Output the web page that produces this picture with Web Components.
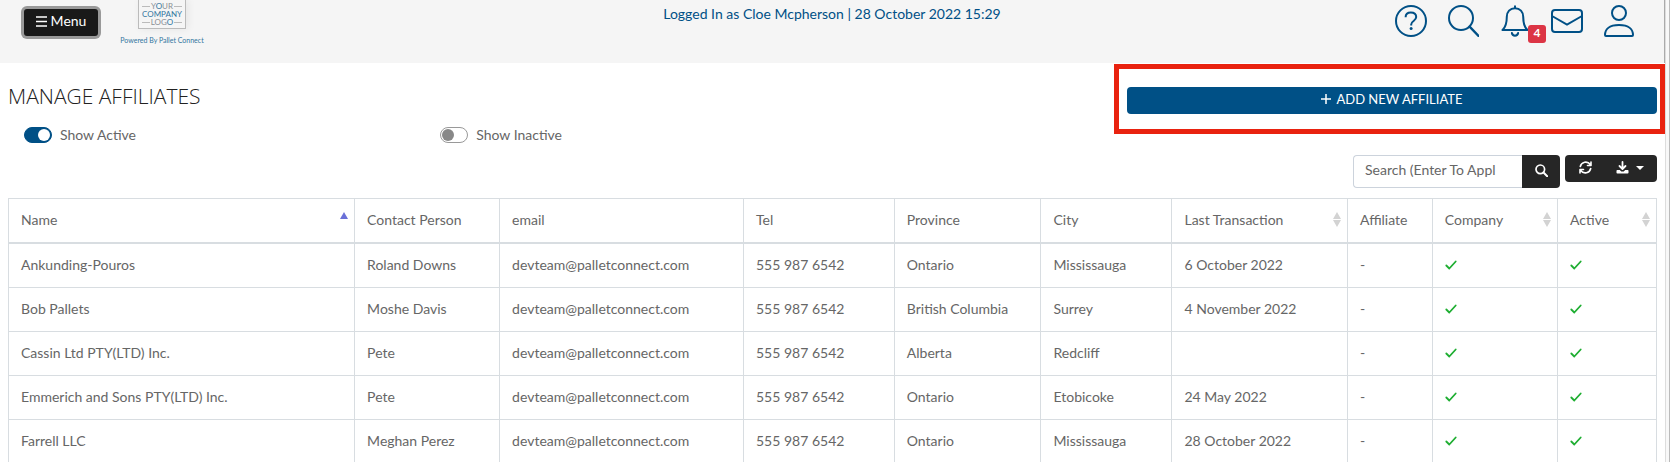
<!DOCTYPE html>
<html lang="en">
<head>
<meta charset="utf-8">
<title>Manage Affiliates</title>
<style>
  body { margin: 0; background: #fff; color: #666; font: 14px/20px Lato, "Open Sans", sans-serif; }
</style>
</head>
<body>
<app-shell>
  <app-header slot="header" user="Cloe Mcpherson" date="28 October 2022 15:29"></app-header>
  <page-title>
    MANAGE AFFILIATES
    <add-button slot="action">ADD NEW AFFILIATE</add-button>
  </page-title>
  <filter-row>
    <toggle-switch checked>Show Active</toggle-switch>
    <toggle-switch>Show Inactive</toggle-switch>
  </filter-row>
  <table-tools></table-tools>
  <affiliate-table></affiliate-table>
</app-shell>

<script>
const define = (name, html, setup) => {
  const template = document.createElement('template');
  template.innerHTML = '<style>*{box-sizing:border-box}button,input{font:inherit;margin:0}button{cursor:pointer}svg{display:block;fill:none;stroke:currentColor}</style>' + html;
  customElements.define(name, class extends HTMLElement {
    connectedCallback() {
      if (this.shadowRoot) return;
      const root = this.attachShadow({ mode: 'open' });
      root.append(template.content.cloneNode(true));
      if (setup) setup(root, this);
    }
  });
};

define('app-shell', `
  <style>
    :host { display: grid; grid-template-columns: 1fr 5px; height: 100vh; overflow: hidden; }
    .page { min-width: 0; overflow: hidden; }
    main { padding: 24px 8px 0; }
    .track { background: #f8f8f8; border-left: 1px solid #ddd; border-right: 1px solid #bbb; }
  </style>
  <div class="page"><slot name="header"></slot><main><slot></slot></main></div>
  <div class="track"></div>`);

define('app-header', `
  <style>
    :host { display: grid; grid-template-columns: 1fr auto 1fr; align-items: start; height: 63px;
      background: #f5f5f5; border-right: 1px solid #aaa; color: #005086; box-sizing: border-box; }
    .left { display: flex; align-items: flex-start; gap: 22px; padding-left: 24px; }
    .menu { display: flex; align-items: center; justify-content: center; gap: 4px; width: 74px; height: 27px; margin-top: 9px;
      padding: 0 0 3px; border: 0; border-radius: 3px; background: #191919; color: #fff; box-shadow: 0 0 0 3px #999; }
    .status { padding-top: 4px; line-height: 20px; }
    nav { display: flex; justify-content: flex-end; gap: 20px; padding: 5px 29px 0 0; }
    nav a { position: relative; color: inherit; }
    .badge { position: absolute; left: 29px; top: 20px; width: 18px; height: 18px; border-radius: 3px;
      background: #dc3545; color: #fff; font-size: 12px; font-weight: 700; line-height: 16px; text-align: center; }
  </style>
  <div class="left">
    <button class="menu" type="button">
      <svg width="11" height="11" viewBox="0 0 11 11" stroke-width="1.4"><path d="M0 1h11M0 5.5h11M0 10h11"/></svg>Menu
    </button>
    <company-logo></company-logo>
  </div>
  <div class="status"></div>
  <nav>
    <a href="#help" aria-label="Help"><svg width="32" height="32" viewBox="0 0 32 32" stroke-width="2"><circle cx="16" cy="16" r="15"/><path d="M10.6 12.2c0-3 2.2-4.7 5.2-4.7 3.2 0 5.4 1.8 5.4 4.6 0 3.9-5 3.8-5 7.3v1"/><circle cx="16.1" cy="23.6" r="1.5" fill="currentColor" stroke="none"/></svg></a>
    <a href="#search" aria-label="Search"><svg width="32" height="32" viewBox="0 0 32 32" stroke-width="2"><circle cx="14" cy="13" r="12"/><path d="M22.600 21.600 31.500 31" stroke-width="2.300" stroke-linecap="round"/></svg></a>
    <a href="#alerts" aria-label="Notifications"><svg width="32" height="32" viewBox="0 0 32 32" stroke-width="2" stroke-linejoin="round"><path d="M16 3.2c-5 0-8.2 3.7-8.2 8.6 0 6.700-1.500 10.800-4.300 13.200h25c-2.800-2.400-4.300-6.500-4.300-13.200 0-4.900-3.200-8.600-8.200-8.600zM16 .5v3"/><path d="M12.900 28c.5 3.500 5.700 3.500 6.200 0" stroke-linecap="round"/></svg><span class="badge">4</span></a>
    <a href="#mail" aria-label="Messages"><svg width="32" height="32" viewBox="0 0 32 32" stroke-width="2"><rect x="1" y="5" width="30" height="22" rx="3"/><path d="m1 11 15 8.600L31 11"/></svg></a>
    <a href="#profile" aria-label="Profile"><svg width="32" height="32" viewBox="0 0 32 32" stroke-width="2"><circle cx="16" cy="8" r="7"/><path d="M3 31c-.6 0-1-.4-1-1 0-5.500 4-10 14-10s14 4.500 14 10c0 .6-.4 1-1 1z"/></svg></a>
  </nav>`, (root, host) => {
  root.querySelector('.status').textContent = 'Logged In as ' + host.getAttribute('user') + ' | ' + host.getAttribute('date');
});

define('company-logo', `
  <style>
    :host { display: flex; flex-direction: column; align-items: center; width: 84px; color: #33759f; font-size: 7px; line-height: 10px; white-space: nowrap; }
    .frame { width: 48px; height: 29px; margin-bottom: 6px; padding-top: 2px; border: 1px solid #bbb; border-top: 0; box-shadow: 2px 0 8px #0001; font-size: 8px; line-height: 8px; }
    .line { display: flex; align-items: center; justify-content: center; gap: 1px; color: #8a8f94; }
    .line.wide { color: #33759f; }
    .line:not(.wide)::before, .line:not(.wide)::after { content: ""; width: 8px; height: 1px; background: #bbb; }
    b { font-weight: 400; color: #33759f; }
  </style>
  <div class="frame">
    <div class="line"><span>Y<b>O</b>UR</span></div>
    <div class="line wide">COMPANY</div>
    <div class="line"><span>LOG<b>O</b></span></div>
  </div>
  <span>Powered By Pallet Connect</span>`);

define('page-title', `
  <style>
    :host { display: grid; grid-template-columns: 19fr 9fr; align-items: start; }
    h1 { margin: 0; color: #222; font: 350 21px/18px "Open Sans", Lato, sans-serif; }
  </style>
  <h1><slot></slot></h1><slot name="action"></slot>`);

define('add-button', `
  <style>
    :host { display: block; position: relative; }
    button { display: flex; align-items: center; justify-content: center; gap: 5px; width: 100%; height: 27px; padding: 0 0 4px;
      border: 0; border-radius: 4px; background: #005086; color: #fff; font-size: 13px; }
    .callout { position: absolute; inset: -23px -8px -20px -13px; border: 5px solid #e9220f; pointer-events: none; }
  </style>
  <button type="button"><svg width="10" height="10" viewBox="0 0 10 10" stroke-width="1.500"><path d="M5 0v10M0 5h10"/></svg><span><slot></slot></span></button>
  <div class="callout"></div>`);

define('filter-row', `
  <style>:host { display: grid; grid-template-columns: repeat(4, 1fr); margin: 12px -8px 11px; }</style>
  <slot></slot>`);

define('toggle-switch', `
  <style>
    :host { display: block; padding-left: 24px; }
    label { display: flex; align-items: center; gap: 8px; line-height: 18px; }
    input { appearance: none; width: 28px; height: 16px; border: 1px solid #999; border-radius: 8px; background: #fff; padding: 1px; }
    input::before { content: ""; display: block; width: 12px; height: 12px; border-radius: 50%; background: #888; }
    input:checked { background: #005086; border-color: #005086; }
    input:checked::before { margin-left: 12px; background: #fff; }
  </style>
  <label><input type="checkbox" role="switch"><span><slot></slot></span></label>`, (root, host) => {
  root.querySelector('input').checked = host.hasAttribute('checked');
});

define('table-tools', `
  <style>
    :host { display: flex; justify-content: flex-end; align-items: flex-start; gap: 5px; margin-bottom: 10px; }
    form, .group { display: flex; }
    input { width: 169px; height: 33px; padding: 0 12px 4px 11px; border: 1px solid #ccd3dc; border-right: 0; border-radius: 4px 0 0 4px; background: #fff; color: #666; }
    input::placeholder { color: #666; opacity: 1; }
    button { display: flex; align-items: center; justify-content: center; gap: 7px; border: 0; padding: 0; background: #262626; color: #fff; }
    form button { width: 38px; height: 33px; border-radius: 0 4px 4px 0; padding-bottom: 2px; }
    .group { border-radius: 4px; overflow: hidden; }
    .group button { width: 40px; height: 27px; padding-bottom: 2px; }
    .group .export { width: 52px; padding-right: 2px; }
  </style>
  <form>
    <input type="search" aria-label="Search" placeholder="Search (Enter To Appl">
    <button type="button" aria-label="Search"><svg width="13" height="13" viewBox="0 0 13 13" stroke-width="1.700"><circle cx="5.300" cy="5.300" r="4.300"/><path d="m8.500 8.500 3.700 3.700" stroke-width="2" stroke-linecap="round"/></svg></button>
  </form>
  <div class="group">
    <button type="button" aria-label="Refresh"><svg width="13" height="13" viewBox="0 0 13 13" stroke-width="1.600" stroke-linecap="round" stroke-linejoin="round"><path d="M1.300 5.500c1-4.500 7-6 10-2M12 1v3.500H8.500M11.700 7.500c-1 4.500-7 6-10 2M1 12V8.500h3.500"/></svg></button>
    <button type="button" class="export" aria-label="Export"><svg width="13" height="13" viewBox="0 0 13 13" stroke-width="1.800" stroke-linecap="round" stroke-linejoin="round"><path d="M6.500 1v6.500M3.500 5l3 3 3-3"/><path d="M1.300 9h2.500l1.500 1.500h2.400L9.200 9h2.500c.6 0 .8.300.8.800v1.900c0 .5-.3.800-.8.800H1.300c-.5 0-.8-.3-.8-.8V9.800c0-.5.300-.8.800-.8z" fill="currentColor" stroke="none"/></svg><svg width="8" height="4" viewBox="0 0 8 4"><path d="M0 0h8L4 4z" fill="currentColor" stroke="none"/></svg></button>
  </div>`);

const columns = [
  ['Name', 21, 'asc'], ['Contact Person', 8.8], ['email', 14.8], ['Tel', 9.15], ['Province', 8.9], ['City', 7.95],
  ['Last Transaction', 10.65, 'both'], ['Affiliate', 5.15], ['Company', 7.6, 'both'], ['Active', 6, 'both']
];
const affiliates = [
  ['Ankunding-Pouros', 'Roland Downs', 'Ontario', 'Mississauga', '6 October 2022'],
  ['Bob Pallets', 'Moshe Davis', 'British Columbia', 'Surrey', '4 November 2022'],
  ['Cassin Ltd PTY(LTD) Inc.', 'Pete', 'Alberta', 'Redcliff', ''],
  ['Emmerich and Sons PTY(LTD) Inc.', 'Pete', 'Ontario', 'Etobicoke', '24 May 2022'],
  ['Farrell LLC', 'Meghan Perez', 'Ontario', 'Mississauga', '28 October 2022']
];
const arrows = {
  asc: '<svg width="8" height="15" viewBox="0 0 8 15"><path d="M4 0l4 7H0z" fill="#6a70d8" stroke="none"/></svg>',
  both: '<svg width="8" height="15" viewBox="0 0 8 15"><path d="M4 0l4 7H0zM4 15l4-7H0z" fill="#d3d3d3" stroke="none"/></svg>'
};
const tick = '<svg role="img" aria-label="Yes" width="12" height="12" viewBox="0 0 12 12" stroke-width="1.800" stroke-linecap="round" stroke-linejoin="round"><path d="M1.300 6.500 4.300 9.500 10.700 2.500"/></svg>';

define('affiliate-table', `
  <style>
    :host { display: block; }
    table { width: 100%; table-layout: fixed; border-collapse: separate; border-spacing: 0; border: 1px solid #d8dde1; border-width: 1px 0 0 1px; }
    th, td { padding: 0 6px 2px 12px; border: 1px solid #d8dde1; border-width: 0 1px 1px 0; text-align: left; font-weight: 400; white-space: nowrap; }
    th { height: 45px; border-bottom-width: 2px; }
    td { height: 44px; }
    .head { display: flex; align-items: center; justify-content: space-between; }
    td svg { stroke: #1fae32; }
  </style>
  <table><colgroup></colgroup><thead><tr></tr></thead><tbody></tbody></table>`, root => {
  root.querySelector('colgroup').innerHTML = columns.map(c => '<col style="width:' + c[1] + '%">').join('');
  root.querySelector('thead tr').innerHTML = columns.map(c => '<th scope="col"><div class="head"><span>' + c[0] + '</span>' + (arrows[c[2]] || '') + '</div></th>').join('');
  root.querySelector('tbody').innerHTML = affiliates.map(([name, contact, province, city, date]) =>
    '<tr>' + [name, contact, 'devteam@palletconnect.com', '555 987 6542', province, city, date, '-', tick, tick].map(v => '<td>' + v + '</td>').join('') + '</tr>').join('');
});
</script>
</body>
</html>
